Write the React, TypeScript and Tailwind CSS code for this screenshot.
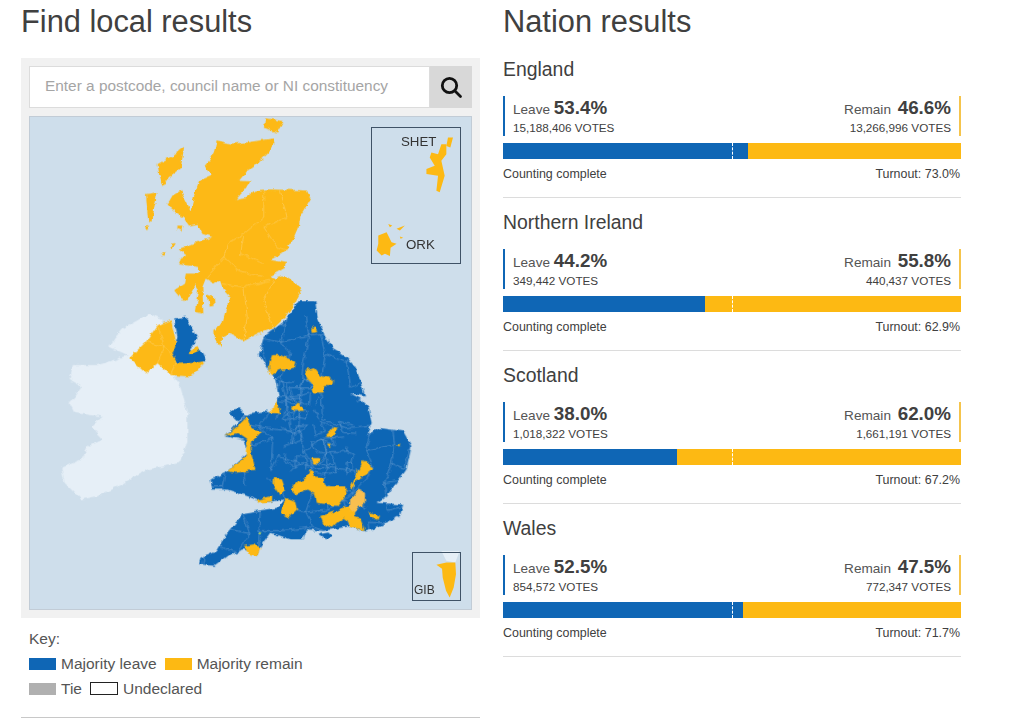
const BLUE = '#0f66b5';
const YEL = '#fdb913';

const results = [
  { name: 'England', leave: 53.4, lv: '15,188,406', remain: 46.6, rv: '13,266,996', turnout: '73.0%' },
  { name: 'Northern Ireland', leave: 44.2, lv: '349,442', remain: 55.8, rv: '440,437', turnout: '62.9%' },
  { name: 'Scotland', leave: 38.0, lv: '1,018,322', remain: 62.0, rv: '1,661,191', turnout: '67.2%' },
  { name: 'Wales', leave: 52.5, lv: '854,572', remain: 47.5, rv: '772,347', turnout: '71.7%' },
];

const scotland = '258,88 300,98 345,95 430,82 432,100 415,125 385,155 350,180 325,210 360,212 340,240 315,268 345,262 372,240 405,236 500,238 530,240 542,265 525,295 510,320 505,350 490,385 470,415 435,440 420,448 468,458 460,475 420,497 440,505 460,497 490,515 516,535 495,575 465,620 430,655 405,662 380,672 340,693 295,670 275,680 270,710 250,690 248,660 275,640 285,600 300,560 270,525 265,510 250,520 225,505 215,530 218,610 195,605 205,540 195,525 170,570 150,565 130,540 160,520 165,490 205,490 205,470 145,462 150,445 170,435 145,415 200,395 245,380 215,370 200,340 175,345 160,325 120,295 110,280 125,255 150,240 165,270 180,300 190,255 205,210 240,195 222,165 235,150 250,120';

const englandWales = '855,0 862,50 885,110 910,145 945,165 970,195 985,225 1005,290 960,280 990,295 1015,320 1025,370 1010,405 1050,385 1120,395 1145,440 1130,510 1100,550 1070,590 1040,610 1120,615 1110,650 1030,690 1005,697 960,680 880,695 830,690 820,720 780,720 720,700 690,740 680,770 640,750 590,770 550,800 505,795 510,775 560,755 590,700 640,640 740,625 760,600 700,610 650,590 590,570 545,570 540,540 590,515 650,460 640,420 585,410 640,350 660,340 700,335 730,340 745,290 735,240 720,215 685,165 700,110 760,65 805,0';

const ireland = '125,195 200,195 250,180 290,165 235,140 250,115 275,85 320,60 355,40 390,55 395,70 430,230 445,250 470,330 470,430 445,490 350,510 260,560 200,590 150,600 100,550 90,505 150,480 170,440 215,420 180,380 215,350 130,340 115,310 150,260 115,240';

const patches = [
  '725,165 750,165 795,185 790,205 750,210 720,225 715,195',
  '843,85 852,78 862,92 845,96',
  '825,210 855,205 875,230 895,232 912,240 910,255 885,255 880,278 850,278 845,250 830,235',
  '735,300 745,320 750,342 715,338 730,325',
  '785,325 800,308 820,322 820,333 790,333',
  '885,410 910,382 925,385 915,405 895,412',
  '890,432 905,432 898,443',
  '1100,435 1110,432 1110,442',
  '842,475 870,475 865,492 850,492',
  '585,410 625,375 650,350 660,385 695,395 665,425 660,450 675,510 620,520 590,515 645,470 650,420 620,400',
  '680,600 725,590 725,605 695,612',
  '730,535 755,540 765,570 750,590 730,560',
  '765,595 795,605 800,630 775,655 750,640 760,615',
  '780,570 800,548 825,540 840,510 855,530 880,535 885,560 945,560 950,585 925,620 895,615 860,610 855,585 830,570 795,585',
  '960,565 985,510 1000,478 1030,505 1010,525 980,540 965,570',
  '870,650 900,640 930,630 960,620 975,640 975,650 990,655 1005,695 960,680 945,655 920,670 905,685 880,675',
  '1015,640 1030,640 1050,650 1045,662 1025,655',
  '640,740 670,735 690,745 680,770 655,765',
];

function rnd(a: number, b: number) {
  const s = Math.sin(a * 12.9898 + b * 78.233) * 43758.5453;
  return s - Math.floor(s);
}

function mesh(x0: number, y0: number, x1: number, y1: number, c: number, keep: number) {
  let d = '';
  const pt = (i: number, j: number) =>
    `${(x0 + i * c + (rnd(i + x0, j) - 0.5) * c * 0.8).toFixed(0)} ${(y0 + j * c + (rnd(j + y0, i) - 0.5) * c * 0.8).toFixed(0)}`;
  const nx = Math.ceil((x1 - x0) / c);
  const ny = Math.ceil((y1 - y0) / c);
  for (let i = 0; i <= nx; i++) {
    for (let j = 0; j <= ny; j++) {
      if (i < nx && rnd(i * 3 + c, j) < keep) d += `M${pt(i, j)}L${pt(i + 1, j)}`;
      if (j < ny && rnd(i, j * 5 + c) < keep) d += `M${pt(i, j)}L${pt(i, j + 1)}`;
    }
  }
  return d;
}

const coarse = mesh(520, 0, 1150, 800, 62, 0.72);
const fine = mesh(740, 240, 860, 340, 24, 0.7) + mesh(760, 370, 960, 520, 30, 0.6);

function UkMap() {
  return (
    <svg viewBox="29 116 442 494" className="absolute inset-0 w-full h-full">
      <defs>
        <filter id="rough" filterUnits="userSpaceOnUse" x="29" y="116" width="442" height="494">
          <feTurbulence type="fractalNoise" baseFrequency="0.17" numOctaves="2" seed="4" result="n" />
          <feDisplacementMap in="SourceGraphic" in2="n" scale="5" xChannelSelector="R" yChannelSelector="G" />
        </filter>
        <clipPath id="ew">
          <polygon points={englandWales} />
        </clipPath>
      </defs>
      <g filter="url(#rough)">
        <g transform="translate(30 300) scale(0.3333)">
          <polygon points={ireland} fill="#e6eff7" />
          <polygon points="420,60 435,120 430,170 500,140 520,190 480,230 420,225 380,190 345,220 295,175 345,125 380,75" fill={YEL} />
          <g fill="none" stroke="#fdd06a" strokeWidth="2">
            <polyline points="345,125 400,140 430,170" />
            <polyline points="380,75 400,140 380,190" />
            <polyline points="420,225 440,180" />
          </g>
          <polygon points="430,55 465,50 500,115 475,150 510,150 525,180 490,185 440,188 425,160 440,110" fill={BLUE} />
          <polygon points="478,150 500,142 505,150 490,163 478,165" fill={YEL} />
          <polygon points={englandWales} fill={BLUE} />
          <polygon points="600,330 625,325 645,345 620,365 600,345" fill={BLUE} />
          <polygon points="865,705 895,700 905,710 885,720" fill={BLUE} />
          <g clipPath="url(#ew)" fill="none" stroke="#6ea2d4" strokeWidth="1.8">
            <path d={coarse} />
            <path d={fine} />
          </g>
          {patches.map((p) => <polygon key={p} points={p} fill={YEL} />)}
          <polygon points="960,600 985,570 1005,580 1005,610 985,625 975,640 960,630" fill="#f8bf4f" />
          <circle cx="688" cy="702" r="4" fill="#a6cf6a" />
        </g>
        <g transform="translate(130 110) scale(0.3333)" fill={YEL}>
          <polygon points={scotland} />
          <polygon points="80,160 125,135 160,108 150,170 120,195 95,230 85,190" />
          <polygon points="45,250 80,245 70,290 65,330 52,335" />
          <polygon points="42,350 55,345 48,360" />
          <polygon points="405,22 460,30 440,65 400,50" />
          <polygon points="228,552 250,560 252,590 235,592" />
          <polygon points="140,345 155,345 152,360 140,355" />
          <polygon points="120,400 135,398 125,415" />
          <polygon points="90,430 108,422 100,436" />
          <g fill="none" stroke="#fdd06a" strokeWidth="2">
            <polyline points="400,240 400,320 340,370 290,400 280,440 320,480 400,500" />
            <polyline points="400,350 440,410 470,420" />
            <polyline points="340,370 330,430 400,460" />
            <polyline points="270,520 340,530 420,510" />
            <polyline points="340,530 350,620 340,690" />
            <polyline points="430,510 400,570 430,660" />
            <polyline points="450,240 470,320 400,350" />
            <polyline points="280,440 230,500" />
          </g>
        </g>
      </g>
      <g transform="translate(130 110) scale(0.3333)" fill={YEL}>
        <polygon points="955,80 970,80 962,110 950,105" />
        <polygon points="905,125 925,130 935,100 950,100 950,130 935,150 945,195 930,245 920,240 925,195 890,190 890,175 915,165 900,140" />
        <polygon points="775,340 787,345 780,350" />
        <polygon points="745,375 770,365 785,395 800,400 782,412 780,437 765,430 755,435 740,420 745,400" />
        <polygon points="800,355 825,345 810,360" />
        <polygon points="810,378 820,382 812,385" />
      </g>
      <g transform="translate(405 545) scale(0.3333)">
        <polygon points="110,20 165,20 152,55 125,50" fill="#e6eff7" />
        <polygon points="95,62 125,55 152,55 154,90 147,130 135,160 124,140 114,100 112,74" fill={YEL} />
      </g>
    </svg>
  );
}

function Row({ r }: { r: (typeof results)[number] }) {
  return (
    <section className="border-b border-[#dcdcdc] mb-[14px] h-[139px]">
      <h3 className="text-[19.4px] leading-[22px] -mt-[1px] mb-[16px] text-[#404040]">{r.name}</h3>
      <div className="flex justify-between h-[40px]">
        <div className="border-l-2 pl-2" style={{ borderColor: BLUE }}>
          <div className="text-[13.6px] leading-[22px] pt-[1px] text-[#555]">Leave <b className="text-[18.8px] text-[#404040]">{r.leave.toFixed(1)}%</b></div>
          <div className="text-[11.7px] leading-[14px] text-[#404040]">{r.lv} VOTES</div>
        </div>
        <div className="border-r-2 pr-2 text-right" style={{ borderColor: '#f5c44c' }}>
          <div className="text-[13.6px] leading-[22px] pt-[1px] text-[#555]">Remain <b className="text-[18.8px] text-[#404040] ml-[3px]">{r.remain.toFixed(1)}%</b></div>
          <div className="text-[11.7px] leading-[14px] text-[#404040]">{r.rv} VOTES</div>
        </div>
      </div>
      <div className="relative flex h-4 mt-[7px]">
        <div className="h-full" style={{ width: `${r.leave}%`, background: BLUE }} />
        <div className="h-full flex-1" style={{ background: YEL }} />
        <div className="absolute left-1/2 top-0 h-full border-l border-dashed border-white" />
      </div>
      <div className="flex justify-between text-[12.45px] leading-[14px] text-[#404040] mt-[8px] pr-[1px]">
        <span>Counting complete</span>
        <span>Turnout: {r.turnout}</span>
      </div>
    </section>
  );
}

export default function App() {
  return (
    <div className="w-[1024px] h-[719px] overflow-hidden bg-white flex pl-[21px] gap-[23px] font-['Liberation_Sans',Arial,sans-serif]">
      <div className="w-[459px] shrink-0">
        <h2 className="text-[30.8px] leading-[36px] pt-[4px] h-[58px] text-[#404040] whitespace-nowrap">Find local results</h2>
        <div className="bg-[#f1f1f1] p-2 h-[560px] flex flex-col gap-2">
          <div className="flex h-[42px] shrink-0">
            <div className="flex-1 bg-white border border-[#dcdcdc] pl-[15px] pb-[2px] flex items-center text-[15.4px] text-[#a5a5a5] whitespace-nowrap">Enter a postcode, council name or NI constituency</div>
            <div className="w-[42px] bg-[#d8d8d8] flex items-center justify-center">
              <svg viewBox="0 0 24 24" className="w-[24px] h-[24px]" fill="none" stroke="#111" strokeWidth="2.8" strokeLinecap="round">
                <circle cx="10.5" cy="10.5" r="7.2" />
                <line x1="16" y1="16" x2="21.5" y2="21.5" />
              </svg>
            </div>
          </div>
          <div className="relative h-[495px] bg-[#cedeeb] border border-[#c2ccd6]">
            <UkMap />
            <div className="absolute left-[341px] top-[10px] w-[90px] h-[137px] border border-[#3f5266] text-[13.3px] text-[#333]">
              <span className="absolute left-[29px] top-[6px] leading-[16px]">SHET</span>
              <span className="absolute left-[34px] top-[109px] leading-[16px]">ORK</span>
            </div>
            <div className="absolute left-[382px] top-[435px] w-[49px] h-[49px] border border-[#3f5266] text-[12px] text-[#333]">
              <span className="absolute left-[1px] bottom-[3px] leading-[14px]">GIB</span>
            </div>
          </div>
        </div>
        <div className="pl-2 pt-[8px] text-[15.5px] leading-[25px] text-[#555]">
          <div>Key:</div>
          <div className="flex items-center">
            <span className="w-[27px] h-[12px] mr-[5px]" style={{ background: BLUE }} />Majority leave
            <span className="w-[27px] h-[12px] ml-[8px] mr-[5px]" style={{ background: YEL }} />Majority remain
          </div>
          <div className="flex items-center">
            <span className="w-[27px] h-[12px] mr-[5px] bg-[#b0b0b0]" />Tie
            <span className="w-[28px] h-[13px] ml-[8px] mr-[5px] border border-[#222]" />Undeclared
          </div>
        </div>
        <div className="border-t border-[#c8c8c8] mt-[16px]" />
      </div>
      <div className="w-[458px] shrink-0 flex flex-col">
        <h2 className="text-[30.8px] leading-[36px] pt-[4px] h-[59px] text-[#404040] whitespace-nowrap">Nation results</h2>
        {results.map((r) => <Row key={r.name} r={r} />)}
      </div>
    </div>
  );
}
